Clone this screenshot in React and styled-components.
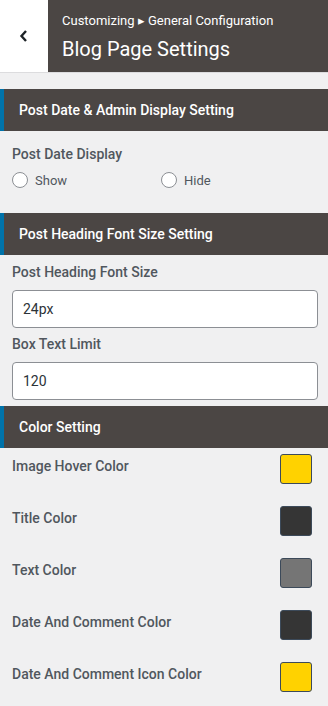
import React, { useState } from "react";
import styled, { createGlobalStyle } from "styled-components";

const GlobalStyle = createGlobalStyle`
  * { box-sizing: border-box; }
  body {
    margin: 0;
    background: #f0f0f1;
    font-family: Roboto, "Noto Sans", sans-serif;
  }
`;

const Page = styled.div`
  width: 328px;
  min-height: 706px;
  background: #f0f0f1;
`;

const Header = styled.div`
  display: flex;
  height: 73px;
  border-bottom: 1px solid #dcdcde;
`;

const BackButton = styled.button`
  width: 48px;
  flex: none;
  background: #fff;
  border: none;
  padding: 0;
  display: flex;
  align-items: center;
  justify-content: center;
  cursor: pointer;
`;

const HeaderText = styled.div`
  flex: 1;
  background: #4b4644;
  color: #fff;
  padding: 13px 14px 0 14px;
`;

const Crumb = styled.div`
  font-size: 13px;
  line-height: 16px;
`;

const Title = styled.div`
  font-size: 20px;
  line-height: 24px;
  margin-top: 8px;
`;

const SectionHead = styled.div`
  height: 42px;
  background: #4b4644;
  border-left: 4px solid #0073aa;
  color: #fff;
  font-size: 14px;
  font-weight: 500;
  display: flex;
  align-items: center;
  padding-left: 15px;
  margin-top: ${(p) => p.$top}px;
`;

const Body = styled.div`
  padding: 0 10px 0 12px;
`;

const Label = styled.div`
  font-size: 14px;
  font-weight: 500;
  color: #50575e;
  line-height: 18px;
  margin-top: ${(p) => p.$top}px;
`;

const RadioRow = styled.div`
  display: flex;
  margin-top: 9px;
`;

const RadioItem = styled.label`
  width: 149px;
  display: flex;
  align-items: center;
  gap: 7px;
  font-size: 13px;
  color: #50575e;
  cursor: pointer;
`;

const RadioCircle = styled.span`
  width: 16px;
  height: 16px;
  border-radius: 50%;
  border: 1px solid #8c8f94;
  background: #fff;
`;

const TextInput = styled.input`
  display: block;
  width: 100%;
  height: 38px;
  margin-top: 9px;
  border: 1px solid #8c8f94;
  border-radius: 4px;
  background: #fff;
  padding: 0 10px;
  font-family: Roboto, sans-serif;
  font-size: 14px;
  color: #2c3338;
  outline: none;
`;

const ColorList = styled.div`
  padding: 6px 16px 0 12px;
`;

const ColorRow = styled.div`
  display: flex;
  align-items: flex-start;
  justify-content: space-between;
  height: 52px;
`;

const ColorName = styled.div`
  font-size: 14px;
  font-weight: 500;
  color: #50575e;
  margin-top: 4px;
`;

const Swatch = styled.button`
  width: 32px;
  height: 30px;
  border-radius: 3px;
  border: 1px solid #3c4a5a;
  background: ${(p) => p.$color};
  padding: 0;
`;

const colors = [
  ["Image Hover Color", "#ffd200"],
  ["Title Color", "#353535"],
  ["Text Color", "#757575"],
  ["Date And Comment Color", "#353535"],
  ["Date And Comment Icon Color", "#ffd200"],
];

export default function App() {
  const [dateDisplay, setDateDisplay] = useState(null);

  return (
    <Page>
      <GlobalStyle />
      <Header>
        <BackButton aria-label="Back">
          <svg width="12" height="14" viewBox="0 0 12 14">
            <path d="M8 2 L3.5 7 L8 12" fill="none" stroke="#1d2327" strokeWidth="2.4" />
          </svg>
        </BackButton>
        <HeaderText>
          <Crumb>Customizing ▸ General Configuration</Crumb>
          <Title>Blog Page Settings</Title>
        </HeaderText>
      </Header>

      <SectionHead $top={16}>Post Date &amp; Admin Display Setting</SectionHead>
      <Body>
        <Label $top={14}>Post Date Display</Label>
        <RadioRow>
          {["Show", "Hide"].map((opt) => (
            <RadioItem key={opt} onClick={() => setDateDisplay(opt)}>
              <RadioCircle />
              {opt}
            </RadioItem>
          ))}
        </RadioRow>
      </Body>

      <SectionHead $top={25}>Post Heading Font Size Setting</SectionHead>
      <Body>
        <Label $top={8}>Post Heading Font Size</Label>
        <TextInput defaultValue="24px" />
        <Label $top={7}>Box Text Limit</Label>
        <TextInput defaultValue="120" />
      </Body>

      <SectionHead $top={6}>Color Setting</SectionHead>
      <ColorList>
        {colors.map(([name, color]) => (
          <ColorRow key={name}>
            <ColorName>{name}</ColorName>
            <Swatch $color={color} />
          </ColorRow>
        ))}
      </ColorList>
    </Page>
  );
}
